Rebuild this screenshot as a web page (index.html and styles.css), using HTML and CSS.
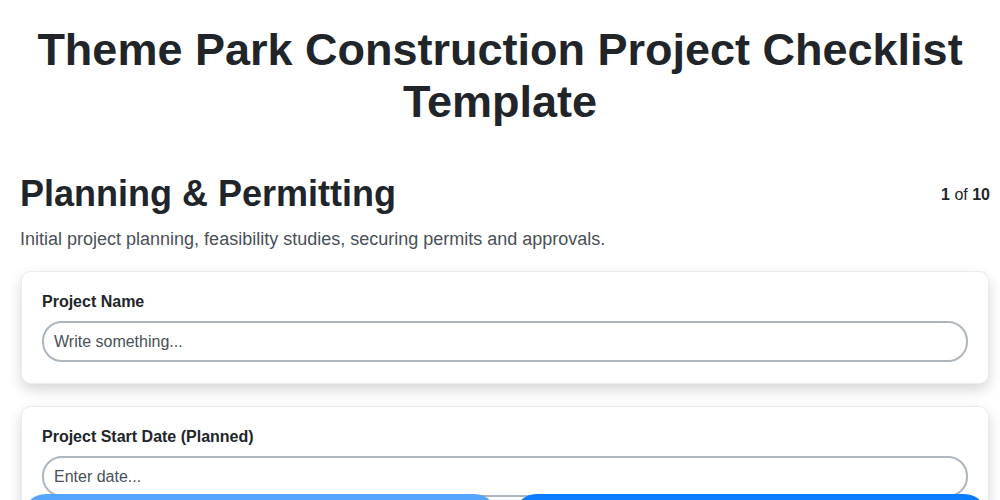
FILE: index.html
```html
<!DOCTYPE html>
<html lang="en">
<head>
    <meta charset="UTF-8">
    <meta name="viewport" content="width=device-width, initial-scale=1.0">
    <title>Theme Park Construction Project Checklist Template</title>
    <link rel="stylesheet" href="styles.css">
</head>
<body>
    <h1 class="title">Theme Park Construction Project Checklist Template</h1>

    <div class="section">
        <!-- Section header -->
        <div class="section-head">
            <h2 class="section-title">Planning &amp; Permitting</h2>
            <div class="step"><b>1</b> of <b>10</b></div>
        </div>
        <p class="section-desc">Initial project planning, feasibility studies, securing permits and approvals.</p>

        <!-- Fields -->
        <div class="field-card">
            <label class="field-label" for="projectName">Project Name</label>
            <input class="field-input" id="projectName" type="text" placeholder="Write something...">
        </div>
        <div class="field-card">
            <label class="field-label" for="startDate">Project Start Date (Planned)</label>
            <input class="field-input" id="startDate" type="text" placeholder="Enter date...">
        </div>
    </div>

    <!-- Navigation -->
    <div class="nav">
        <button class="btn prev" aria-label="Previous"></button>
        <button class="btn next" aria-label="Next"></button>
    </div>
</body>
</html>
```

FILE: styles.css
```css
* {
    box-sizing: border-box;
    margin: 0;
    padding: 0;
    font-family: "Liberation Sans", Arial, sans-serif;
}
body {
    background-color: #fff;
    color: #212529;
}
.title {
    font-size: 45px;
    line-height: 52px;
    font-weight: bold;
    text-align: center;
    padding: 24px 20px 0;
    color: #212529;
}
.section {
    margin-top: 44px;
    padding: 0 10px 0 20px;
}
.section-head {
    display: flex;
    justify-content: space-between;
    align-items: flex-start;
}
.section-title {
    font-size: 36px;
    line-height: 44px;
    font-weight: bold;
}
.step {
    font-size: 16px;
    padding-top: 14px;
}
.section-desc {
    font-size: 18px;
    line-height: 24px;
    color: #495057;
    margin-top: 11px;
}
.field-card {
    margin: 20px 1px 0 1px;
    padding: 20px 20px 21px;
    border: 1px solid #e9ecef;
    border-radius: 10px;
    background-color: #fff;
    box-shadow: 0 6px 14px rgba(0, 0, 0, 0.16);
}
.field-card + .field-card {
    margin-top: 22px;
}
.field-label {
    display: block;
    font-size: 16px;
    line-height: 20px;
    font-weight: bold;
    margin-bottom: 9px;
}
.field-input {
    width: 100%;
    height: 41px;
    padding: 0 10px;
    font-size: 16px;
    border: 2px solid #adb5bd;
    border-radius: 20px;
    color: #212529;
    outline: none;
}
.field-input::placeholder {
    color: #495057;
}
.nav {
    position: fixed;
    left: 22px;
    right: 12px;
    bottom: -42px;
    display: grid;
    grid-template-columns: 1fr 1fr;
    gap: 15px;
}
.btn {
    height: 48px;
    border: none;
    border-radius: 24px;
    cursor: pointer;
}
.btn.prev {
    background-color: #52a5fb;
}
.btn.next {
    background-color: #0a7dff;
}
```
